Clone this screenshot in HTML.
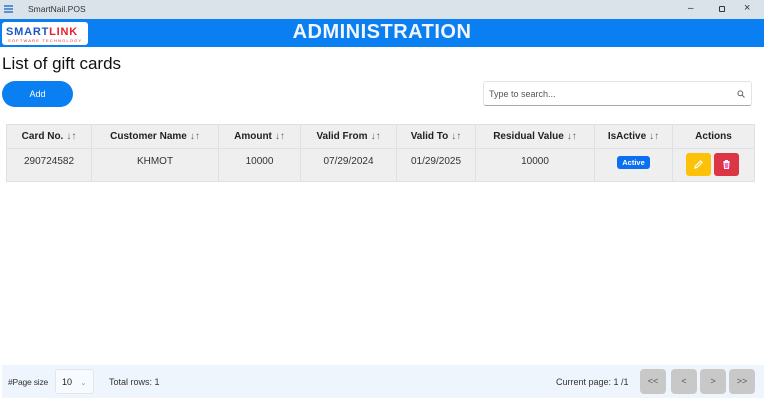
<!DOCTYPE html>
<html><head><meta charset="utf-8"><style>
*{margin:0;padding:0;box-sizing:border-box}
body{width:764px;height:403px;overflow:hidden;background:#fff;font-family:"Liberation Sans",sans-serif;position:relative;color:#222}
.abs{position:absolute}
.tb{left:0;top:0;width:764px;height:19px;background:#dae2ea}
.hd{left:0;top:19px;width:764px;height:28px;background:#0a7ff2}
table{position:absolute;left:6px;top:124px;width:749px;border-collapse:collapse;font-size:10px;background:#efefef}
th,td{border:1px solid #dde1e5;text-align:center}
th{height:24px;font-weight:bold;color:#222}
td{height:33px;vertical-align:top;padding-top:7px;color:#333}
.ar{color:#666;font-weight:normal;font-size:10px;margin-left:3px}
.pb{top:369px;width:26px;height:25px;background:#c8c8c8;border-radius:4px;font-size:9px;color:#555;text-align:center;line-height:25px}
</style></head><body>
<div class="abs tb"></div>
<div class="abs" style="left:4px;top:5px;width:9px;height:1.5px;background:#5a8fd0;box-shadow:0 3px 0 #5a8fd0,0 6px 0 #5a8fd0"></div>
<div class="abs" style="left:28px;top:4px;font-size:8.5px;color:#333">SmartNail.POS</div>
<div class="abs" style="left:688px;top:3px;font-size:10px;color:#333">–</div>
<div class="abs" style="left:719px;top:6px;width:6px;height:6px;border:1.5px solid #333;border-radius:1px"></div>
<div class="abs" style="left:744px;top:2px;font-size:11px;color:#333">×</div>
<div class="abs hd"></div>
<div class="abs" style="left:2px;top:22px;width:86px;height:23px;background:#fff;border-radius:3px"></div>
<div class="abs" style="left:6px;top:26px;font-size:11px;font-weight:bold;letter-spacing:0.8px"><span style="color:#1b56c8">SMART</span><span style="color:#e8202a">LINK</span></div>
<div class="abs" style="left:8px;top:38px;font-size:4px;color:#e8202a;letter-spacing:1.2px">SOFTWARE TECHNOLOGY</div>
<div class="abs" style="left:0;top:21px;width:764px;text-align:center;font-size:20px;font-weight:bold;color:#f2f6fc;letter-spacing:0.5px">ADMINISTRATION</div>
<div class="abs" style="left:2px;top:54px;font-size:17px;color:#111">List of gift cards</div>
<div class="abs" style="left:2px;top:81px;width:71px;height:26px;background:#0a7ff2;border-radius:13px;color:#fff;font-size:9px;text-align:center;line-height:26px">Add</div>
<div class="abs" style="left:483px;top:81px;width:269px;height:25px;border:1px solid #e3e3e3;border-bottom:1px solid #aaa;border-radius:3px;font-size:9px;color:#555;padding:7px 0 0 5px">Type to search...</div>
<svg class="abs" style="left:737px;top:90px" width="8" height="8" viewBox="0 0 8 8"><circle cx="3.3" cy="3.3" r="2.4" fill="none" stroke="#666" stroke-width="1"/><path d="M5 5L7.5 7.5" stroke="#666" stroke-width="1"/></svg>
<table>
<tr><th style="width:85px">Card No.<span class="ar">↓↑</span></th><th style="width:127px">Customer Name<span class="ar">↓↑</span></th><th style="width:82px">Amount<span class="ar">↓↑</span></th><th style="width:96px">Valid From<span class="ar">↓↑</span></th><th style="width:79px">Valid To<span class="ar">↓↑</span></th><th style="width:119px">Residual Value<span class="ar">↓↑</span></th><th style="width:78px">IsActive<span class="ar">↓↑</span></th><th>Actions</th></tr>
<tr><td>290724582</td><td>KHMOT</td><td>10000</td><td>07/29/2024</td><td>01/29/2025</td><td>10000</td><td><span style="display:inline-block;background:#0a6ff0;color:#fff;font-size:7.5px;font-weight:bold;padding:2px 5px;border-radius:3px">Active</span></td><td></td></tr>
</table>
<div class="abs" style="left:686px;top:153px;width:25px;height:23px;background:#fcc20a;border-radius:3px"></div>
<svg class="abs" style="left:693px;top:159px" width="11" height="11" viewBox="0 0 11 11"><path d="M2 9L2.5 7L7.5 2L9 3.5L4 8.5Z" fill="none" stroke="#fff" stroke-width="1.2"/></svg>
<div class="abs" style="left:714px;top:153px;width:25px;height:23px;background:#dc3545;border-radius:3px"></div>
<svg class="abs" style="left:721px;top:159px" width="11" height="11" viewBox="0 0 11 11"><path d="M2.5 2.5H8.5M4.5 2.5V1.5H6.5V2.5M3 3.5H8L7.5 9.5H3.5Z" fill="#f6c" stroke="#fff" stroke-width="1"/></svg>
<div class="abs" style="left:2px;top:365px;width:762px;height:33px;background:#eef5fd"></div>
<div class="abs" style="left:8px;top:377px;font-size:8.5px;color:#333;letter-spacing:-0.2px">#Page size</div>
<div class="abs" style="left:55px;top:369px;width:39px;height:25px;background:#f7fafe;border:1px solid #e0e6ee;border-radius:3px;font-size:9px;padding:7px 0 0 6px">10 <span style="color:#888;margin-left:6px;font-size:7px">⌄</span></div>
<div class="abs" style="left:109px;top:377px;font-size:9px;color:#333">Total rows: 1</div>
<div class="abs" style="left:556px;top:377px;font-size:9px;color:#333">Current page: 1 /1</div>
<div class="abs pb" style="left:640px">&lt;&lt;</div>
<div class="abs pb" style="left:671px">&lt;</div>
<div class="abs pb" style="left:700px">&gt;</div>
<div class="abs pb" style="left:729px">&gt;&gt;</div>
</body></html>
